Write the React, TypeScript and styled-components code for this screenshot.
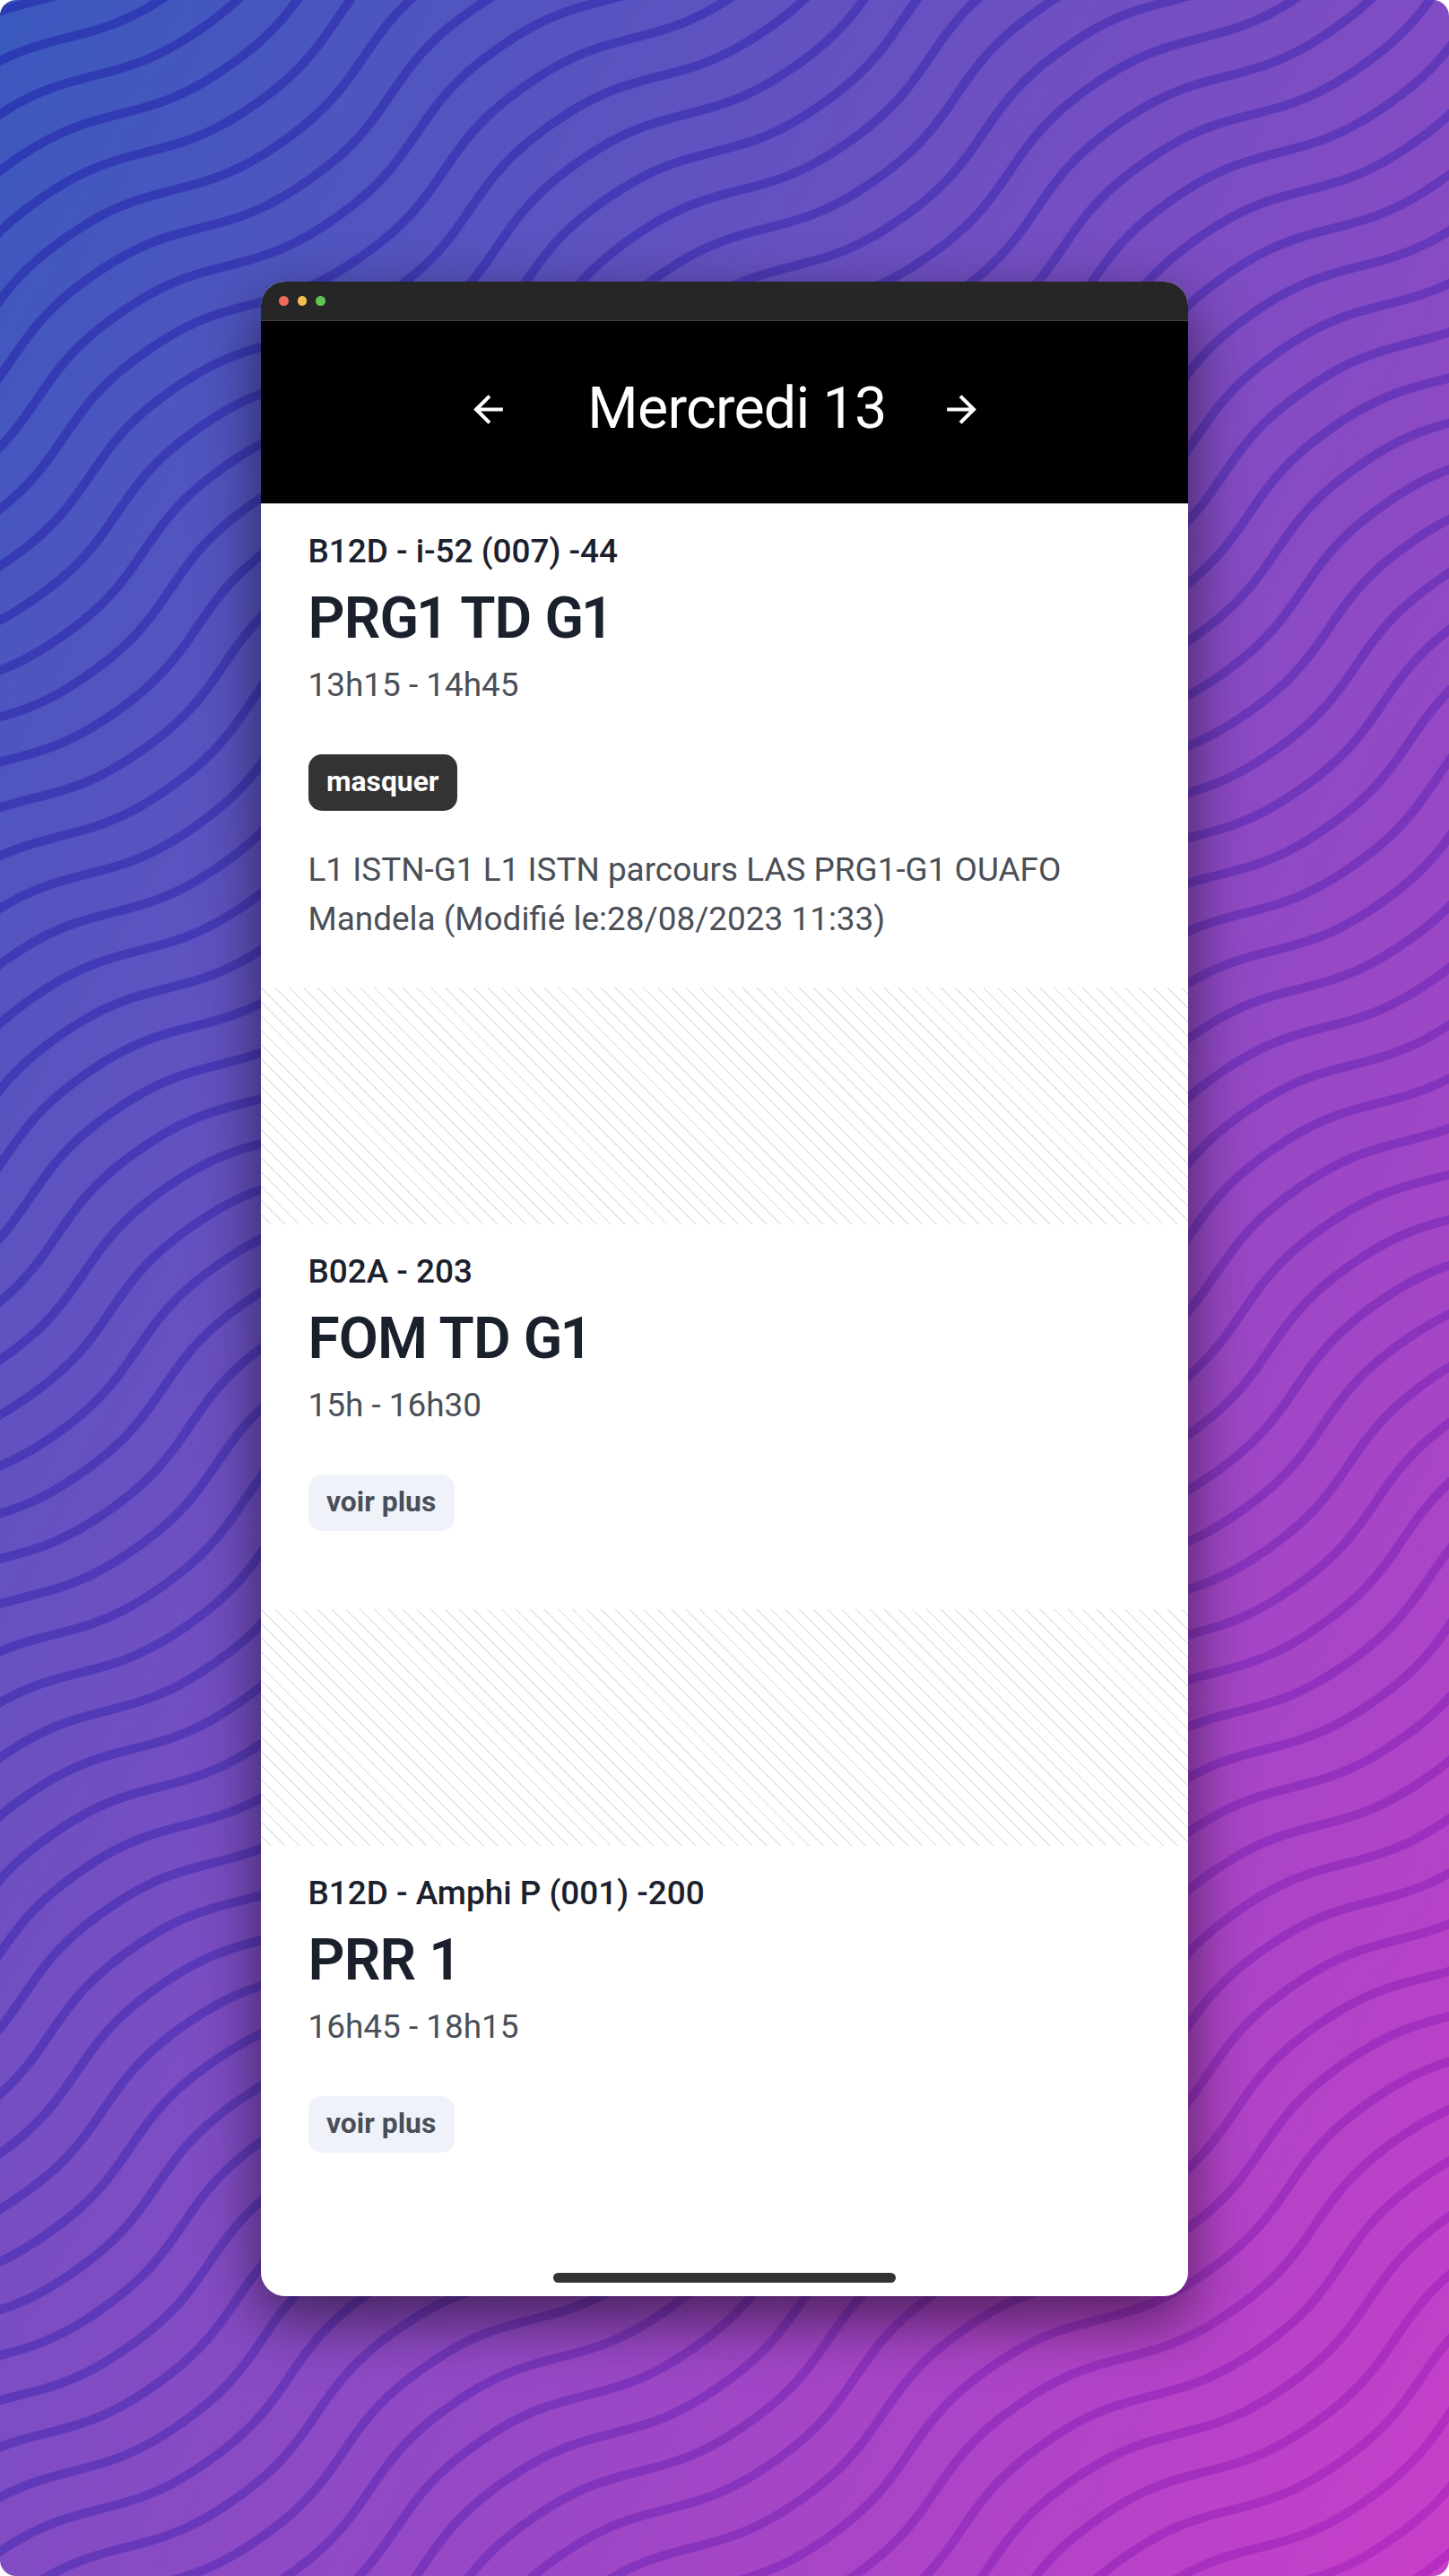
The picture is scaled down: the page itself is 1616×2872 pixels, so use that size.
import React from "react";
import styled, { createGlobalStyle } from "styled-components";

const GlobalStyle = createGlobalStyle`
  * { box-sizing: border-box; }
  body { margin: 0; background: #fff; font-family: Roboto, "Liberation Sans", sans-serif; }
`;

const Backdrop = styled.main`
  position: relative;
  display: flex;
  justify-content: center;
  width: 1616px;
  height: 2872px;
  padding-top: 314px;
  border-radius: 18px;
  overflow: hidden;
  background: linear-gradient(to bottom right, #3a59be, #c83fc9);
`;

const WaveLayer = styled.svg`
  position: absolute;
  inset: 0;
`;

const Window = styled.section`
  position: relative;
  display: flex;
  flex-direction: column;
  width: 1034px;
  height: 2246px;
  border-radius: 27px;
  overflow: hidden;
  background: #fff;
`;

const WindowShadow = styled.div`
  position: relative;
  height: 2246px;
  border-radius: 27px;
  box-shadow: 0 25px 68px rgba(0, 0, 0, 0.56);
`;

const TitleBar = styled.div`
  display: flex;
  align-items: center;
  gap: 10px;
  flex: none;
  height: 44px;
  padding: 0 20px;
  background: #262626;
  border-bottom: 1px solid #404040;
`;

const Dot = styled.span<{ $color: string }>`
  width: 10.5px;
  height: 10.5px;
  border-radius: 50%;
  background: ${(p) => p.$color};
`;

const DayBar = styled.header`
  display: flex;
  align-items: center;
  justify-content: center;
  flex: none;
  height: 204px;
  padding-bottom: 7px;
  background: #000;
  color: #fff;
  border-bottom: 1px solid #b4b4b4;
`;

const DayName = styled.h1`
  margin: 0;
  width: 479px;
  padding: 0 0 2px 28px;
  text-align: center;
  font-size: 64.6px;
  font-weight: 400;
  line-height: 1;
  letter-spacing: -0.8px;
`;

const IconButton = styled.button`
  display: flex;
  padding: 0;
  border: 0;
  background: none;
  color: inherit;
`;

const Course = styled.article<{ $height: number }>`
  display: flex;
  flex-direction: column;
  align-items: flex-start;
  flex: none;
  height: ${(p) => p.$height}px;
  padding: 25px 52px 0 52.5px;
`;

const Room = styled.p`
  margin: 0;
  font-size: 36.9px;
  font-weight: 500;
  line-height: 56px;
  color: #1a202c;
`;

const CourseTitle = styled.h2`
  margin: 0;
  padding-top: 7px;
  font-size: 64px;
  font-weight: 600;
  line-height: 80px;
  letter-spacing: -0.9px;
  color: #1a202c;
`;

const Kern = styled.span`
  letter-spacing: -3px;
`;

const Hours = styled.p`
  margin: 0;
  padding-top: 6px;
  font-size: 36.9px;
  line-height: 56px;
  color: #4a4f57;
`;

const Toggle = styled.button<{ $open?: boolean }>`
  height: 63px;
  margin: 49px 0 0;
  padding: 0 20.5px 2px;
  border: 0;
  border-radius: 15px;
  font-family: inherit;
  font-size: 31.8px;
  font-weight: 700;
  line-height: 59px;
  color: ${(p) => (p.$open ? "#fff" : "#4a4f57")};
  background: ${(p) => (p.$open ? "#333" : "#eff3f9")};
`;

const Details = styled.p`
  margin: 0;
  padding-top: 38px;
  font-size: 36.9px;
  line-height: 55.4px;
  color: #4a4f57;
`;

const Break = styled.div`
  flex: none;
  height: 263.6px;
  background: repeating-linear-gradient(
    45deg,
    transparent 0 6.9px,
    #dadada 7.9px,
    transparent 8.9px 11.17px
  );
`;

const HomeIndicator = styled.div`
  width: 382.5px;
  height: 10.5px;
  margin: auto auto 15.5px;
  border-radius: 6px;
  background: #333;
`;

const STEP = 51.77;
const PERIOD = 517;

function wavePath() {
  let d = "";
  for (let u = -1750; u <= 1450; u += 10) {
    const phase = (2 * Math.PI * (u - 296)) / PERIOD;
    const v = 25.8 - 26.9 * Math.sin(phase) - 1.4 * Math.sin(3 * phase);
    d += `${d ? "L" : "M"}${u} ${v.toFixed(2)}`;
  }
  return d;
}

function Waves() {
  const lines = Array.from({ length: 68 }, (_, i) => i - 2);
  return (
    <WaveLayer width="1616" height="2872" viewBox="0 0 1616 2872" aria-hidden="true">
      <defs>
        <linearGradient id="ink" gradientUnits="userSpaceOnUse" x1="-419" y1="745" x2="2035" y2="2127">
          <stop offset="0" stopColor="#2b3bb3" />
          <stop offset="0.5" stopColor="#6039b9" />
          <stop offset="1" stopColor="#b62dc1" />
        </linearGradient>
        <path id="wave" d={wavePath()} fill="none" strokeWidth="10" />
        <mask id="lines" maskUnits="userSpaceOnUse" x="0" y="0" width="1616" height="2872">
          <g transform="rotate(-35)" stroke="#fff">
            {lines.map((i) => (
              <use key={i} href="#wave" y={i * STEP} />
            ))}
          </g>
        </mask>
      </defs>
      <rect width="1616" height="2872" fill="url(#ink)" mask="url(#lines)" />
    </WaveLayer>
  );
}

const ArrowBack = () => (
  <svg width="49" height="49" viewBox="0 0 24 24" fill="currentColor">
    <path d="M20 11H7.83l5.59-5.59L12 4l-8 8 8 8 1.41-1.41L7.83 13H20v-2z" />
  </svg>
);

const ArrowForward = () => (
  <svg width="49" height="49" viewBox="0 0 24 24" fill="currentColor">
    <path d="M12 4l-1.41 1.41L16.17 11H4v2h12.17l-5.58 5.59L12 20l8-8z" />
  </svg>
);

// Pulls the figure closer to the preceding G in group names such as "G1".
function kernGroups(title: string) {
  return title.split(/(G)(?=1)/).map((part, i) => (i % 2 ? <Kern key={i}>{part}</Kern> : part));
}

interface CourseData {
  room: string;
  title: string;
  hours: string;
  details?: string;
  height: number;
}

const COURSES: CourseData[] = [
  {
    room: "B12D - i-52 (007) -44",
    title: "PRG1 TD G1",
    hours: "13h15 - 14h45",
    details: "L1 ISTN-G1 L1 ISTN parcours LAS PRG1-G1 OUAFO Mandela (Modifié le:28/08/2023 11:33)",
    height: 539,
  },
  { room: "B02A - 203", title: "FOM TD G1", hours: "15h - 16h30", height: 429.7 },
  { room: "B12D - Amphi P (001) -200", title: "PRR 1", hours: "16h45 - 18h15", height: 429.7 },
];

export default function App() {
  return (
    <>
      <GlobalStyle />
      <Backdrop>
        <Waves />
        <WindowShadow>
          <Window>
            <TitleBar>
              <Dot $color="#ed6a5e" />
              <Dot $color="#f5bf4f" />
              <Dot $color="#61c554" />
            </TitleBar>
            <DayBar>
              <IconButton aria-label="Jour précédent">
                <ArrowBack />
              </IconButton>
              <DayName>Mercredi 13</DayName>
              <IconButton aria-label="Jour suivant">
                <ArrowForward />
              </IconButton>
            </DayBar>
            {COURSES.map((c, i) => (
              <React.Fragment key={c.title}>
                {i > 0 && <Break />}
                <Course $height={c.height}>
                  <Room>{c.room}</Room>
                  <CourseTitle>{kernGroups(c.title)}</CourseTitle>
                  <Hours>{c.hours}</Hours>
                  <Toggle $open={!!c.details}>{c.details ? "masquer" : "voir plus"}</Toggle>
                  {c.details && <Details>{c.details}</Details>}
                </Course>
              </React.Fragment>
            ))}
            <HomeIndicator />
          </Window>
        </WindowShadow>
      </Backdrop>
    </>
  );
}
